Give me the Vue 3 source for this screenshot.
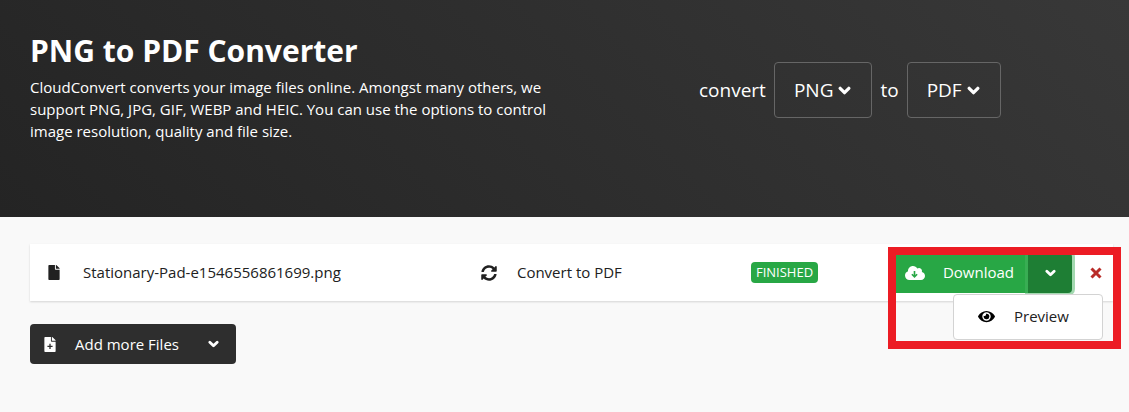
<template>
  <div class="page">
    <header class="hero">
      <div class="intro">
        <h1>PNG to PDF Converter</h1>
        <p>
          CloudConvert converts your image files online. Amongst many others, we
          support PNG, JPG, GIF, WEBP and HEIC. You can use the options to control
          image resolution, quality and file size.
        </p>
      </div>
      <div class="formats">
        <span>convert</span>
        <button type="button" class="format">
          {{ from }}
          <svg class="chevron" viewBox="0 0 12 8"><path d="M2 2l4 4 4-4" /></svg>
        </button>
        <span>to</span>
        <button type="button" class="format">
          {{ to }}
          <svg class="chevron" viewBox="0 0 12 8"><path d="M2 2l4 4 4-4" /></svg>
        </button>
      </div>
    </header>

    <main class="content">
      <div v-for="file in files" :key="file.name" class="file-row">
        <div class="cell">
          <svg class="icon-file" viewBox="0 0 384 512"><path :d="filePath" /></svg>
          <span>{{ file.name }}</span>
        </div>
        <div class="cell">
          <svg class="icon-sync" viewBox="0 0 512 512"><path :d="syncPath" /></svg>
          <span>Convert to {{ to }}</span>
        </div>
        <div class="cell">
          <span class="badge">{{ file.status }}</span>
        </div>
        <div class="actions">
          <div class="btn-group">
            <button type="button" class="download">
              <svg class="icon-cloud" viewBox="0 0 640 512">
                <path :d="cloudPath" />
                <path class="arrow" d="M304 190v180M220 296l84 84 84-84" />
              </svg>
              Download
            </button>
            <button
              type="button"
              class="toggle"
              aria-label="More actions"
              :aria-expanded="menuOpen"
              @click="menuOpen = !menuOpen"
            >
              <svg class="chevron small" viewBox="0 0 12 8"><path d="M2 2l4 4 4-4" /></svg>
            </button>
            <div v-if="menuOpen" class="menu">
              <button type="button" class="menu-item">
                <svg class="icon-eye" viewBox="0 0 576 512"><path :d="eyePath" /></svg>
                Preview
              </button>
            </div>
          </div>
          <button type="button" class="remove" aria-label="Remove file">
            <svg viewBox="0 0 12 12"><path d="M1.5 1.5l9 9M10.5 1.5l-9 9" /></svg>
          </button>
          <div class="highlight"></div>
        </div>
      </div>

      <button type="button" class="add-files">
        <svg class="icon-file" viewBox="0 0 384 512">
          <path :d="filePath" />
          <path class="plus" d="M192 232v176M104 320h176" />
        </svg>
        <span>Add more Files</span>
        <svg class="chevron small" viewBox="0 0 12 8"><path d="M2 2l4 4 4-4" /></svg>
      </button>
    </main>
  </div>
</template>

<script setup>
import { ref } from 'vue'

const from = ref('PNG')
const to = ref('PDF')
const menuOpen = ref(true)

const files = ref([
  { name: 'Stationary-Pad-e1546556861699.png', status: 'FINISHED' }
])

const filePath = 'M224 136V0H24C10.7 0 0 10.7 0 24v464c0 13.3 10.7 24 24 24h336c13.3 0 24-10.7 24-24V160H248c-13.2 0-24-10.8-24-24zm160-14.1v6.1H256V0h6.1c6.4 0 12.5 2.5 17 7l97.9 98c4.5 4.5 7 10.6 7 16.9z'
const syncPath = 'M370.72 133.28C339.458 104.008 298.888 87.962 255.848 88c-77.458.068-144.328 53.178-162.791 126.85-1.344 5.363-6.122 9.15-11.651 9.15H24.103c-7.498 0-13.194-6.807-11.807-14.176C33.933 94.924 134.813 8 256 8c66.448 0 126.791 26.136 171.315 68.685L463.03 40.97C478.149 25.851 504 36.559 504 57.941V192c0 13.255-10.745 24-24 24H345.941c-21.382 0-32.09-25.851-16.971-40.971l41.75-41.749zM32 296h134.059c21.382 0 32.09 25.851 16.971 40.971l-41.75 41.75c31.262 29.273 71.835 45.319 114.876 45.28 77.418-.07 144.315-53.144 162.787-126.849 1.344-5.363 6.122-9.15 11.651-9.15h57.304c7.498 0 13.194 6.807 11.807 14.176C478.067 417.076 377.187 504 256 504c-66.448 0-126.791-26.136-171.315-68.685L48.97 471.03C33.851 486.149 8 475.441 8 454.059V320c0-13.255 10.745-24 24-24z'
const cloudPath = 'M537.6 226.6c4.1-10.7 6.4-22.4 6.4-34.6 0-53-43-96-96-96-19.7 0-38.1 6-53.3 16.2C367 64.2 315.3 32 256 32c-88.4 0-160 71.6-160 160 0 2.7.1 5.4.2 8.1C40.2 219.8 0 273.2 0 336c0 79.5 64.5 144 144 144h368c70.7 0 128-57.3 128-128 0-61.9-44-113.6-102.4-125.4z'
const eyePath = 'M572.52 241.4C518.29 135.59 410.93 64 288 64S57.68 135.64 3.48 241.41a32.35 32.35 0 0 0 0 29.19C57.71 376.41 165.07 448 288 448s230.32-71.64 284.52-177.41a32.35 32.35 0 0 0 0-29.19zM288 400a144 144 0 1 1 144-144 143.93 143.93 0 0 1-144 144zm0-240a95.31 95.31 0 0 0-25.31 3.79 47.85 47.85 0 0 1-66.9 66.9A95.78 95.78 0 1 0 288 160z'
</script>

<style>
body {
  margin: 0;
  background: #f9f9f9;
}
</style>

<style scoped>
.page {
  font-family: 'Open Sans', sans-serif;
  font-size: 15px;
  line-height: 22px;
  color: #212121;
}

button {
  margin: 0;
  padding: 0;
  border: 0;
  background: none;
  font: inherit;
  color: inherit;
  cursor: pointer;
}

svg {
  display: block;
  flex: none;
  fill: currentColor;
}

.hero {
  display: grid;
  grid-template-columns: minmax(0, 669fr) minmax(0, 430fr);
  align-items: start;
  box-sizing: border-box;
  min-height: 217px;
  padding: 32px 0 32px 30px;
  background: linear-gradient(45deg, #242424, #383838);
  color: #fff;
}

.intro {
  max-width: 530px;
}

h1 {
  margin: 0 0 6px;
  font-size: 30px;
  line-height: 38px;
  font-weight: 700;
}

p {
  margin: 0;
}

.formats {
  display: flex;
  align-items: center;
  gap: 8px;
  padding-top: 30px;
  font-size: 19px;
}

.format {
  display: flex;
  align-items: center;
  gap: 5px;
  height: 56px;
  padding: 0 20px 0 19px;
  border: 1px solid #666;
  border-radius: 4px;
}

.chevron {
  width: 13px;
  height: 9px;
  fill: none;
  stroke: currentColor;
  stroke-width: 3;
  stroke-linecap: round;
  stroke-linejoin: round;
}

.chevron.small {
  width: 11px;
  height: 8px;
}

.content {
  padding: 27px 16px 48px 30px;
  line-height: 21px;
}

.file-row {
  display: grid;
  grid-template-columns: minmax(0, 433fr) minmax(0, 270fr) minmax(0, 139fr) auto;
  align-items: center;
  height: 57px;
  padding: 0 11px 0 18px;
  background: #fff;
  box-shadow: 0 1px 2px rgba(0, 0, 0, 0.15);
}

.cell {
  display: flex;
  align-items: center;
}

.icon-file {
  width: 12px;
  height: 15px;
  margin-right: 23px;
}

.icon-sync {
  width: 16px;
  height: 16px;
  margin-right: 20px;
}

.badge {
  padding: 0 5px;
  border-radius: 4px;
  background: #28a745;
  color: #fff;
  font-size: 13px;
}

.actions {
  position: relative;
  display: flex;
  align-items: center;
}

.btn-group {
  position: relative;
  display: flex;
  color: #fff;
}

.download {
  display: flex;
  align-items: center;
  gap: 18px;
  height: 40px;
  padding: 0 14px 0 15px;
  border-radius: 4px 0 0 4px;
  background: #28a745;
}

.icon-cloud {
  width: 20px;
  height: 16px;
}

.arrow {
  fill: none;
  stroke: #28a745;
  stroke-width: 52;
}

.toggle {
  display: flex;
  align-items: center;
  justify-content: center;
  width: 44px;
  height: 40px;
  border-radius: 0 4px 4px 0;
  background: #1e7e34;
  box-shadow: 0 0 0 3px rgba(72, 180, 97, 0.5);
}

/* opens below the toggle */
.menu {
  position: absolute;
  top: 41px;
  right: -31px;
  z-index: 2;
  box-sizing: border-box;
  width: 150px;
  border: 1px solid #d3d3d3;
  border-radius: 4px;
  background: #fff;
  color: #212121;
}

.menu-item {
  display: flex;
  align-items: center;
  gap: 19px;
  width: 100%;
  height: 44px;
  padding: 0 24px;
}

.icon-eye {
  width: 17px;
  height: 15px;
  color: #000;
}

.remove {
  padding: 4px 0;
  margin-left: 18px;
  color: #b92c28;
}

.remove svg {
  width: 12px;
  height: 12px;
  fill: none;
  stroke: currentColor;
  stroke-width: 3;
}

.highlight {
  position: absolute;
  top: -6px;
  left: -2px;
  right: -19px;
  z-index: 3;
  box-sizing: border-box;
  height: 102px;
  border: 8px solid #ec1c24;
  pointer-events: none;
}

.add-files {
  display: flex;
  align-items: center;
  height: 40px;
  margin-top: 23px;
  padding: 0 17px 0 14px;
  border-radius: 4px;
  background: #2e2e2e;
  color: #fff;
}

.add-files .icon-file {
  margin-right: 19px;
}

.add-files .chevron {
  margin-left: 29px;
}

.plus {
  fill: none;
  stroke: #2e2e2e;
  stroke-width: 44;
}
</style>
